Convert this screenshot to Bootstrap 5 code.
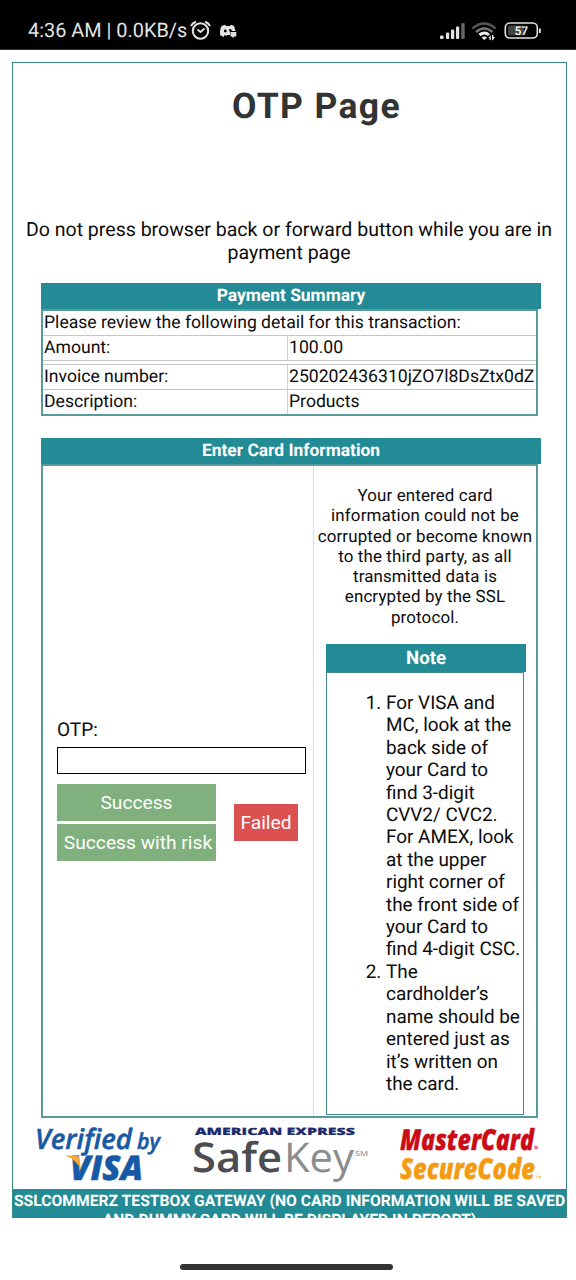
<!DOCTYPE html>
<html lang="en">
<head>
<meta charset="utf-8">
<meta name="viewport" content="width=device-width, initial-scale=1">
<title>OTP Page</title>
<link href="https://cdn.jsdelivr.net/npm/bootstrap@5.3.0/dist/css/bootstrap.min.css" rel="stylesheet">
<style>
:root{--teal:#228b95;--line:#41898c;--rule:#c4c6c7}
body{font-family:Roboto,"Liberation Sans",sans-serif;color:#0c0c0c;width:576px;height:1280px;overflow:hidden;background:#fff;text-rendering:geometricPrecision}
.statusbar{height:50px;background:#000;color:#e4e4e4;padding:12px 34px 0 28px;border-bottom:1px solid #333}
.clock{font-size:19.9px;line-height:38px;height:38px;white-space:nowrap}
.frame{width:555px;height:1156px;margin:12px 0 0 12px;border:1px solid #38897f;border-bottom:0;overflow:hidden}
.title{font-size:35.5px;line-height:42px;font-weight:700;color:#333;letter-spacing:1.35px;margin:22px 0 0 54px}
.warn{font-size:19.55px;line-height:23px;height:46px;margin:91px 0 0 -1px;white-space:nowrap}
.panel{width:497px;margin-left:28px;display:flex;flex-direction:column}
.bar{background:var(--teal);color:#fff;font-weight:700;width:500px;height:26px;line-height:27px;font-size:17.4px;flex:none}
.box{border:2px solid #599a9c;flex:1}
.summary{font-size:17.6px;line-height:24px;white-space:nowrap}
.summary .line{height:25px;border-bottom:1px solid var(--rule)}
.summary .line>div{padding-left:1px}
.summary .key{width:245px;border-right:1px solid #d0d2d3}
.left{width:271px;border-right:1px solid #dadcdd;padding:252px 0 0 14px}
.otp{font-size:19px;line-height:24px;height:29px}
.field{width:249px;height:27px;border:1px solid #000;border-radius:0;padding:0;display:block;box-shadow:none}
.act{border:0;border-radius:0;color:#fff;font-size:19.2px;line-height:37px;height:37px;padding:0;white-space:nowrap}
.act.ok{background:#80b07d;width:159px}
.act.risk{padding-left:3px}
.act.bad{background:#db5151;width:64px}
.safe{font-size:16.9px;line-height:20.3px;letter-spacing:.15px;white-space:nowrap;height:142px;margin-top:20px}
.note{margin-left:12px;width:198px;height:471px}
.note .bar{width:200px;height:28px;line-height:28px;font-size:18.6px}
.note .inner{border:1px solid var(--line);flex:1}
.note ol{font-size:18.9px;line-height:22.4px;padding-left:59px;margin:19px 0 0;white-space:nowrap}
.logos{height:71px}
.foot{background:var(--teal);color:#fff;font-size:15.7px;font-weight:700;line-height:19px;height:29px;padding-top:2px;white-space:nowrap;overflow:hidden}
.home{width:213px;height:6px;background:#333;margin:46px 0 0 180px}
</style>
</head>
<body>
<header class="statusbar d-flex justify-content-between">
  <div class="clock d-flex"><span style="width:161px">4:36 AM | 0.0KB/s</span>
    <svg width="60" height="38" viewBox="189 12 60 38" fill="none" stroke="#e4e4e4">
      <circle cx="200.5" cy="31" r="7.7" stroke-width="2"/>
      <path d="M191 26q1.500-3 5-4.200M210 26q-1.500-3-5-4.200" stroke-width="2"/><path d="M197.500 29.500l3 2.500 4-3.500" stroke-width="1.800"/>
      <path fill="#e4e4e4" stroke="none" d="M221.500 26l3.500-1.300 1 1.300h4l1-1.300 3 1.300 1.500 5h-5.500v4h-3l-.3 1-2-1-1 2-3.500-1.700c-.5-3.500 0-6.500 1.300-9.300z"/>
      <circle cx="225.300" cy="31" r="1.400" fill="#000" stroke="none"/><circle cx="230.300" cy="30.300" r="1.200" fill="#000" stroke="none"/>
      <path fill="#e4e4e4" stroke="none" d="M230.500 32h5.800v4.500h-2l-1.300 1.500-1-1.500h-1.500z"/>
    </svg></div>
  <svg width="104" height="38" viewBox="438 12 104 38">
    <g fill="#e4e4e4"><rect x="440" y="35.500" width="3.500" height="3.500" rx="1"/><rect x="446" y="32.500" width="3.200" height="6.500" rx="1"/><rect x="451" y="29.500" width="3.200" height="9.500" rx="1"/><rect x="456" y="26.500" width="3.200" height="12.500" rx="1"/><rect x="461.200" y="23" width="3.500" height="16" rx="1" fill="#666"/></g>
    <g fill="none" stroke-width="2.500"><path d="M472.500 28.500q11.500-10 23 0" stroke="#555"/><path d="M476 32q8-7 16.500 0" stroke="#777"/><path d="M479.500 35q5-4 9.500 0" stroke="#eee" stroke-width="3"/></g>
    <path fill="#eee" d="M481.500 37.500q3-2 5.500 0l-2.700 2.500zM488.500 38l2.300-3v5h-1.300v-2zM492 35h1.300v2h1.700l-2.500 3.500h-.5z"/>
    <rect x="505.300" y="23" width="32" height="15" rx="4.500" fill="none" stroke="#e4e4e4" stroke-width="1.600"/><rect x="508" y="25.500" width="16" height="10" rx="2" fill="#444"/><rect x="539" y="28.500" width="1.800" height="4.500" fill="#e4e4e4"/>
    <text x="521.300" y="35" text-anchor="middle" font-size="12" font-weight="500" fill="#fff">57</text>
  </svg>
</header>
<main class="frame">
  <h1 class="title text-center">OTP Page</h1>
  <p class="warn text-center mb-0">Do not press browser back or forward button while you are in<br>payment page</p>
  <section class="panel" style="height:133px;margin-top:19px">
    <div class="bar text-center">Payment Summary</div>
    <div class="box summary">
      <div class="line"><div>Please review the following detail for this transaction:</div></div>
      <div class="line d-flex"><div class="key">Amount:</div><div>100.00</div></div>
      <div class="line" style="height:4px"></div>
      <div class="line d-flex"><div class="key">Invoice number:</div><div>250202436310jZO7l8DsZtx0dZ</div></div>
      <div class="line d-flex border-0" style="height:24px"><div class="key">Description:</div><div>Products</div></div>
    </div>
  </section>
  <section class="panel" style="height:680px;margin-top:22px">
    <div class="bar text-center">Enter Card Information</div>
    <div class="box d-flex">
      <div class="left">
        <label class="otp d-block" for="otp">OTP:</label>
        <input id="otp" class="field form-control">
        <div class="d-flex align-items-center" style="gap:18px;margin-top:10px">
          <div class="d-flex flex-column" style="gap:3px"><button class="act ok">Success</button><button class="act ok risk">Success with risk</button></div>
          <button class="act bad">Failed</button>
        </div>
      </div>
      <div class="flex-fill">
        <p class="safe text-center mb-0">Your entered card<br>information could not be<br>corrupted or become known<br>to the third party, as all<br>transmitted data is<br>encrypted by the SSL<br>protocol.</p>
        <div class="note d-flex flex-column" style="margin-top:16px">
          <div class="bar text-center">Note</div>
          <div class="inner"><ol>
            <li>For VISA and<br>MC, look at the<br>back side of<br>your Card to<br>find 3-digit<br>CVV2/ CVC2.<br>For AMEX, look<br>at the upper<br>right corner of<br>the front side of<br>your Card to<br>find 4-digit CSC.</li>
            <li>The<br>cardholder’s<br>name should be<br>entered just as<br>it’s written on<br>the card.</li>
          </ol></div>
        </div>
      </div>
    </div>
  </section>
  <svg class="logos d-block" width="553" viewBox="13 1118 553 71" font-family="Open Sans" font-weight="700">
    <g fill="#1859a5" stroke="#1859a5" stroke-width=".5" font-style="italic">
      <text x="35" y="1149" font-size="28" font-weight="600" textLength="97" lengthAdjust="spacingAndGlyphs">Verified</text>
      <text x="137" y="1149" font-size="22" font-weight="600" textLength="23" lengthAdjust="spacingAndGlyphs">by</text>
      <text x="70" y="1180" font-size="34" font-weight="800" textLength="73" lengthAdjust="spacingAndGlyphs">VISA</text>
    </g>
    <path d="M65 1155.500h11q3 0 3.500 3.500l1.500 11q-5-11-16-14.500z" fill="#f2a83b"/>
    <text x="195" y="1135" font-size="10" font-weight="800" fill="#1b2b6b" stroke="#1b2b6b" stroke-width=".2" textLength="160" lengthAdjust="spacingAndGlyphs">AMERICAN EXPRESS</text>
    <text x="192" y="1172" font-size="41" font-weight="600" fill="#4c4d50" textLength="90" lengthAdjust="spacingAndGlyphs">Safe</text>
    <text x="284" y="1172" font-size="41" font-weight="400" fill="#8a8c8e" textLength="70" lengthAdjust="spacingAndGlyphs">Key</text>
    <text x="355" y="1156" font-size="7" font-weight="400" fill="#808285" textLength="13" lengthAdjust="spacingAndGlyphs">SM</text>
    <g font-style="italic" font-weight="800" font-size="29" stroke-width=".3">
      <text x="400" y="1150" fill="#cb0c16" stroke="#cb0c16" textLength="134" lengthAdjust="spacingAndGlyphs">MasterCard</text>
      <text x="400" y="1178.500" fill="#f39b13" stroke="#f39b13" textLength="135" lengthAdjust="spacingAndGlyphs">SecureCode</text>
    </g>
    <circle cx="536" cy="1147.500" r="1.600" fill="#e58a8d" stroke="#d9555b" stroke-width=".7"/><path d="M535.500 1176h2.500M536.800 1176v2.500M539 1178.500v-2.500l1 1.500 1-1.500v2.500" fill="none" stroke="#f3ae48" stroke-width=".6"/>
  </svg>
  <footer class="foot text-center">SSLCOMMERZ TESTBOX GATEWAY (NO CARD INFORMATION WILL BE SAVED<br>AND DUMMY CARD WILL BE DISPLAYED IN REPORT)</footer>
</main>
<div class="home rounded-pill"></div>
<script src="https://cdn.jsdelivr.net/npm/bootstrap@5.3.0/dist/js/bootstrap.bundle.min.js"></script>
</body>
</html>
